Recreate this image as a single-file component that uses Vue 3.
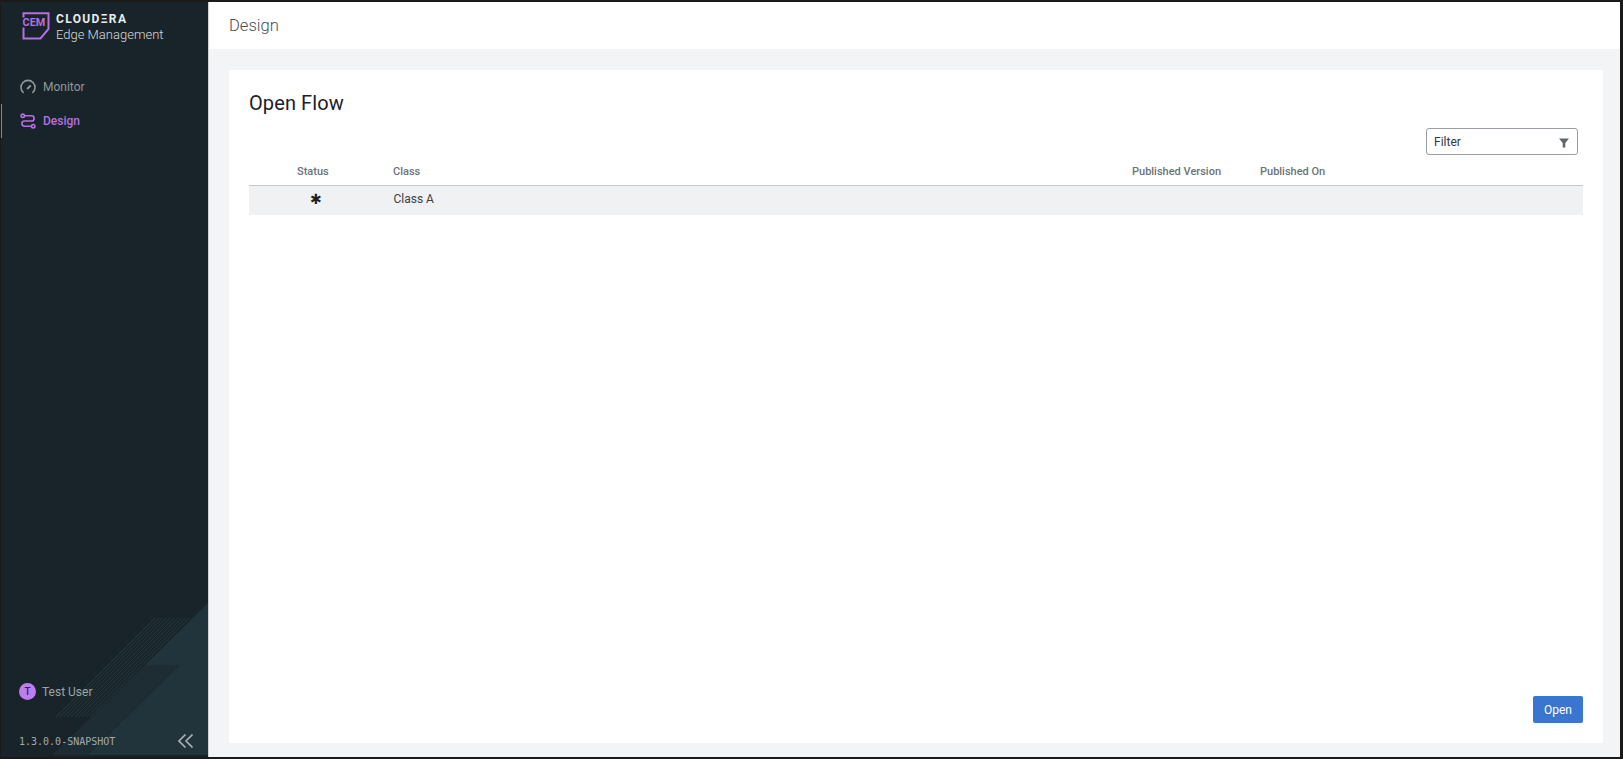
<script setup>
const stripes = Array.from({ length: 10 }, (_, i) => i * 3.8)
</script>

<template>
  <div class="frame">
    <aside class="sidebar">
      <svg class="decor" width="208" height="757" viewBox="0 0 208 757" aria-hidden="true">
        <polygon points="52,755 145,665 180,665 88,755" fill="#1d2d33" />
        <polygon points="208,603 145,665 180,665 88,755 208,755" fill="#21343b" />
        <g stroke="#26393f" stroke-width="1">
          <line v-for="s in stripes" :key="s" :x1="155 + s" y1="618" :x2="56 + s" y2="717" />
        </g>
      </svg>

      <div class="brand">
        <svg class="logo" width="28" height="28" viewBox="0 0 28 28" aria-hidden="true">
          <path d="M1.5 5.5V1.2H26.5V17L18.5 26.5H1.5V15.5" fill="none" stroke="#b56fe3" stroke-width="2" />
          <text x="0.6" y="14.2" font-family="Roboto, sans-serif" font-weight="700" font-size="10.8" fill="#b56fe3">CEM</text>
        </svg>
        <div class="brand-text">
          <div class="brand-name">CLOUDΞRA</div>
          <div class="brand-sub">Edge Management</div>
        </div>
      </div>

      <nav class="nav">
        <div class="nav-item">
          <svg width="16" height="16" viewBox="0 0 16 16" fill="none" stroke="currentColor" stroke-width="1.6" stroke-linecap="round">
            <path d="M3.2 13.5A7 7 0 1 1 12.8 13.5" />
            <path d="M7.6 9.4 10.2 7" stroke-width="2" />
          </svg>
          <span>Monitor</span>
        </div>
        <div class="nav-item active">
          <svg width="16" height="16" viewBox="0 0 16 16" fill="none" stroke="currentColor" stroke-width="1.6" stroke-linecap="round">
            <circle cx="2.8" cy="2.8" r="1.7" />
            <circle cx="13.2" cy="13.2" r="1.7" />
            <path d="M4.5 2.8H11.5a2.6 2.6 0 0 1 0 5.2H4.5a2.6 2.6 0 0 0 0 5.2H11.5" />
          </svg>
          <span>Design</span>
        </div>
      </nav>

      <div class="side-foot">
        <div class="user">
          <span class="avatar">T</span>
          <span>Test User</span>
        </div>
        <div class="version-row">
          <span class="version">1.3.0.0-SNAPSHOT</span>
          <svg width="15" height="14" viewBox="0 0 15 14" fill="none" stroke="#a9b0b2" stroke-width="1.6">
            <path d="M7.5 .5 1 7l6.5 6.5" />
            <path d="M14.5 .5 8 7l6.5 6.5" />
          </svg>
        </div>
      </div>
    </aside>

    <main class="main">
      <header class="topbar">Design</header>
      <div class="content">
        <section class="card">
          <h1 class="title">Open Flow</h1>
          <div class="filter-row">
            <div class="filter">
              <span>Filter</span>
              <svg class="funnel" width="10" height="10" viewBox="0 0 10 10"><path d="M0 .5H10L6.3 5V9.6H3.7V5Z" fill="#5f676c" /></svg>
            </div>
          </div>
          <div class="grid head">
            <div class="status-h">Status</div>
            <div>Class</div>
            <div>Published Version</div>
            <div>Published On</div>
          </div>
          <div class="grid row">
            <div class="status-c">✱</div>
            <div class="class-c">Class A</div>
            <div></div>
            <div></div>
          </div>
          <div class="actions">
            <button class="open">Open</button>
          </div>
        </section>
      </div>
    </main>
  </div>
</template>

<style>
html, body { margin: 0; height: 100%; overflow: hidden; }
</style>

<style scoped>
.frame {
  box-sizing: border-box;
  height: 759px;
  padding: 2px 3px 2px 1px;
  background: #1a1a1a;
  display: flex;
  font-family: Roboto, "Liberation Sans", sans-serif;
}
.sidebar {
  position: relative;
  width: 207px;
  flex: none;
  background: #19242a;
  display: flex;
  flex-direction: column;
  overflow: hidden;
  color: #8f989b;
}
.decor { position: absolute; left: -1px; top: -2px; }
.brand {
  position: relative;
  display: flex;
  gap: 6px;
  padding: 10px 0 0 21px;
}
.logo { display: block; flex: none; }
.brand-text { color: #e9eced; }
.brand-name {
  font-size: 12px;
  font-weight: 700;
  letter-spacing: 1.35px;
  line-height: 13px;
  margin-top: 1px;
}
.brand-sub {
  font-size: 13px;
  font-weight: 300;
  line-height: 16px;
  margin-top: 1px;
  color: #d8dcdd;
}
.nav { position: relative; margin-top: 27px; }
.nav-item {
  display: flex;
  align-items: center;
  gap: 7px;
  height: 34px;
  padding-left: 19px;
  font-size: 12px;
  box-sizing: border-box;
}
.nav-item.active {
  color: #b56fe3;
  font-weight: 500;
  box-shadow: inset 1px 0 0 #a764d2;
}
.side-foot {
  position: relative;
  margin-top: auto;
  padding: 0 15px 9px 18px;
}
.user {
  display: flex;
  align-items: center;
  gap: 6px;
  font-size: 12px;
  color: #9da5a8;
}
.avatar {
  width: 17px;
  height: 17px;
  border-radius: 50%;
  background: #bd7cf0;
  color: #2f2a3a;
  font-size: 10px;
  font-weight: 500;
  display: flex;
  align-items: center;
  justify-content: center;
}
.version-row {
  display: flex;
  align-items: center;
  justify-content: space-between;
  margin-top: 34px;
}
.version {
  font-family: "DejaVu Sans Mono", "Liberation Mono", monospace;
  font-size: 10px;
  color: #a3aaad;
}
.main {
  flex: 1;
  min-width: 0;
  display: flex;
  flex-direction: column;
  background: #f3f4f6;
  border-left: 1px solid #cfd2d4;
}
.topbar {
  height: 47px;
  flex: none;
  box-sizing: border-box;
  background: #fff;
  padding: 0 0 0 20px;
  display: flex;
  align-items: center;
  font-size: 16.6px;
  font-weight: 300;
  color: #4a4f53;
}
.content {
  flex: 1;
  min-height: 0;
  display: flex;
  padding: 21px 17px 14px 20px;
}
.card {
  flex: 1;
  background: #fff;
  padding: 20px;
  display: flex;
  flex-direction: column;
  min-width: 0;
}
.title {
  margin: 0;
  font-size: 20px;
  font-weight: 400;
  line-height: 26px;
  letter-spacing: 0.1px;
  color: #1c2126;
}
.filter-row {
  display: flex;
  justify-content: flex-end;
  padding-right: 5px;
  margin-top: 12px;
}
.filter {
  box-sizing: border-box;
  width: 152px;
  height: 27px;
  border: 1px solid #989ea3;
  border-radius: 3px;
  padding: 0 8px 0 7px;
  display: flex;
  align-items: center;
  justify-content: space-between;
  font-size: 12px;
  color: #32383d;
}
.funnel { margin-top: 2px; }
.grid {
  display: grid;
  grid-template-columns: 144px 739px 128px 1fr;
  box-sizing: border-box;
}
.head {
  height: 31px;
  padding-top: 10px;
  line-height: 14px;
  font-size: 11px;
  font-weight: 500;
  color: #6c7378;
  border-bottom: 1px solid #c4c8cb;
}
.status-h { padding-left: 48px; }
.row {
  height: 29px;
  padding-bottom: 3px;
  align-items: center;
  background: #f0f1f3;
  font-size: 12px;
  color: #3b4146;
}
.status-c {
  padding-left: 61px;
  font-family: "DejaVu Sans", sans-serif;
  font-size: 14px;
  font-weight: 700;
  line-height: 12px;
  color: #1c2126;
}
.class-c { padding-left: 0.5px; }
.actions {
  margin-top: auto;
  display: flex;
  justify-content: flex-end;
}
.open {
  width: 50px;
  height: 27px;
  border: 0;
  border-radius: 2px;
  background: #3a76d0;
  color: #fff;
  font-family: inherit;
  font-size: 12px;
  padding: 0;
}
</style>
